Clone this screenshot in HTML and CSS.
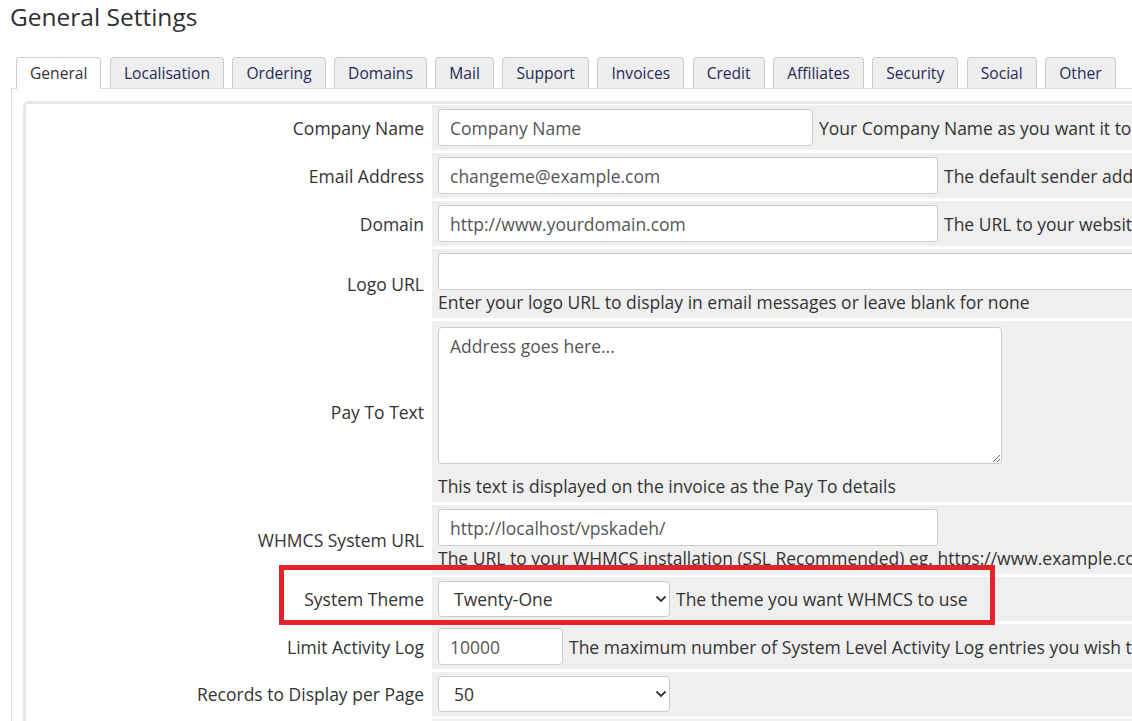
FILE: index.html
```html
<!DOCTYPE html>
<html lang="en">
<head>
    <meta charset="UTF-8">
    <meta name="viewport" content="width=device-width, initial-scale=1.0">
    <title>General Settings</title>
    <link rel="stylesheet" href="styles.css">
</head>
<body>
    <h1 class="page-title">General Settings</h1>

    <ul class="tabs">
        <li class="tab active">General</li>
        <li class="tab">Localisation</li>
        <li class="tab">Ordering</li>
        <li class="tab">Domains</li>
        <li class="tab">Mail</li>
        <li class="tab">Support</li>
        <li class="tab">Invoices</li>
        <li class="tab">Credit</li>
        <li class="tab">Affiliates</li>
        <li class="tab">Security</li>
        <li class="tab">Social</li>
        <li class="tab">Other</li>
    </ul>

    <div class="tab-pane">
        <div class="settings-box">
            <table class="form">
                <tr>
                    <td class="fieldlabel">Company Name</td>
                    <td class="fieldarea">
                        <div class="line">
                            <input type="text" class="input w-company" value="Company Name">
                            <span class="help">Your Company Name as you want it to appear throughout the system</span>
                        </div>
                    </td>
                </tr>
                <tr>
                    <td class="fieldlabel">Email Address</td>
                    <td class="fieldarea">
                        <div class="line">
                            <input type="text" class="input w-large" value="changeme@example.com">
                            <span class="help">The default sender address used for emails sent by WHMCS</span>
                        </div>
                    </td>
                </tr>
                <tr>
                    <td class="fieldlabel">Domain</td>
                    <td class="fieldarea">
                        <div class="line">
                            <input type="text" class="input w-large" value="http://www.yourdomain.com">
                            <span class="help">The URL to your website homepage</span>
                        </div>
                    </td>
                </tr>
                <tr>
                    <td class="fieldlabel">Logo URL</td>
                    <td class="fieldarea">
                        <input type="text" class="input w-full" value="">
                        <div class="help-block">Enter your logo URL to display in email messages or leave blank for none</div>
                    </td>
                </tr>
                <tr>
                    <td class="fieldlabel">Pay To Text</td>
                    <td class="fieldarea">
                        <textarea class="textarea">Address goes here...</textarea>
                        <div class="help-block">This text is displayed on the invoice as the Pay To details</div>
                    </td>
                </tr>
                <tr>
                    <td class="fieldlabel">WHMCS System URL</td>
                    <td class="fieldarea">
                        <input type="text" class="input w-large" value="http://localhost/vpskadeh/">
                        <div class="help-block">The URL to your WHMCS installation (SSL Recommended) eg. https://www.example.com/members/</div>
                    </td>
                </tr>
                <tr>
                    <td class="fieldlabel">System Theme</td>
                    <td class="fieldarea">
                        <div class="line">
                            <span class="select-wrap">
                                <select class="select">
                                    <option>Twenty-One</option>
                                </select>
                                <svg class="chevron" width="12" height="8" viewBox="0 0 12 8"><path d="M1.5 1.5 6 6l4.5-4.5" fill="none" stroke="#333" stroke-width="1.8"/></svg>
                            </span>
                            <span class="help">The theme you want WHMCS to use</span>
                        </div>
                    </td>
                </tr>
                <tr>
                    <td class="fieldlabel">Limit Activity Log</td>
                    <td class="fieldarea">
                        <div class="line">
                            <input type="text" class="input w-small" value="10000">
                            <span class="help">The maximum number of System Level Activity Log entries you wish to retain</span>
                        </div>
                    </td>
                </tr>
                <tr>
                    <td class="fieldlabel">Records to Display per Page</td>
                    <td class="fieldarea">
                        <div class="line">
                            <span class="select-wrap">
                                <select class="select">
                                    <option>50</option>
                                </select>
                                <svg class="chevron" width="12" height="8" viewBox="0 0 12 8"><path d="M1.5 1.5 6 6l4.5-4.5" fill="none" stroke="#333" stroke-width="1.8"/></svg>
                            </span>
                        </div>
                    </td>
                </tr>
                <tr>
                    <td class="fieldlabel">&nbsp;</td>
                    <td class="fieldarea">&nbsp;</td>
                </tr>
            </table>
        </div>
    </div>

    <div class="highlight"></div>
</body>
</html>
```

FILE: styles.css
```css
html, body {
    overflow: hidden;
}
body {
    margin: 0;
    font-family: "Open Sans", "Liberation Sans", sans-serif;
    color: #333;
    background-color: #fff;
    position: relative;
}
.page-title {
    margin: 0 0 23px 0;
    padding-left: 10px;
    font-size: 24.5px;
    font-weight: normal;
    line-height: 34px;
    color: #2f2f2f;
}
.tabs {
    display: flex;
    align-items: flex-start;
    list-style: none;
    margin: 0 0 -1px 11px;
    padding: 0 0 0 5px;
    position: relative;
    z-index: 1;
    white-space: nowrap;
}
.tab {
    height: 30px;
    line-height: 30px;
    padding: 0 13px;
    margin-right: 8.5px;
    font-size: 15.6px;
    color: #1f2b57;
    background-color: #eee;
    border: 1px solid #ccc;
    border-bottom: none;
    border-radius: 4px 4px 0 0;
}
.tab.active {
    height: 31px;
    background-color: #fff;
    color: #333;
}
.tab-pane {
    margin-left: 11px;
    border-left: 1px solid #ddd;
    border-top: 1px solid #ddd;
    padding: 12px 0 0 11px;
}
.settings-box {
    width: 1600px;
    border: 3px solid #e3e8eb;
    border-radius: 6px;
    background-color: #fff;
}
.form {
    border-collapse: separate;
    border-spacing: 0 3px;
    margin-top: -2px;
    width: 100%;
}
.form td {
    vertical-align: middle;
    font-size: 17.5px;
    line-height: 24px;
    padding: 4px 6px;
}
.fieldlabel {
    width: 406px;
    box-sizing: border-box;
    text-align: right;
    padding-right: 8px !important;
    white-space: nowrap;
}
.fieldarea {
    background-color: #efefef;
    white-space: nowrap;
}
.line {
    display: flex;
    align-items: center;
    gap: 6px;
}
.input,
.textarea,
.select {
    box-sizing: border-box;
    font-family: "Open Sans", "Liberation Sans", sans-serif;
    font-size: 17.5px;
    color: #555;
    background-color: #fff;
    border: 1px solid #ccc;
    border-radius: 4px;
    margin: 0;
}
.input {
    display: block;
    height: 37px;
    padding: 0 11px;
}
.w-company { width: 375px; }
.w-large { width: 500px; }
.w-full { width: 800px; }
.w-small { width: 125px; }
.textarea {
    display: block;
    width: 564px;
    height: 137px;
    margin: 2px 0 10px 0;
    padding: 6px 11px;
    resize: vertical;
}
.help-block {
    line-height: 24px;
}
.select-wrap {
    position: relative;
    display: block;
}
.select {
    display: block;
    appearance: none;
    -webkit-appearance: none;
    width: 232px;
    height: 36px;
    padding: 0 15px;
    color: #333;
}
.chevron {
    position: absolute;
    right: 3px;
    top: 14px;
}
.highlight {
    position: absolute;
    left: 279px;
    top: 565px;
    width: 716px;
    height: 60px;
    box-sizing: border-box;
    border: 5px solid #e4222a;
}
```
